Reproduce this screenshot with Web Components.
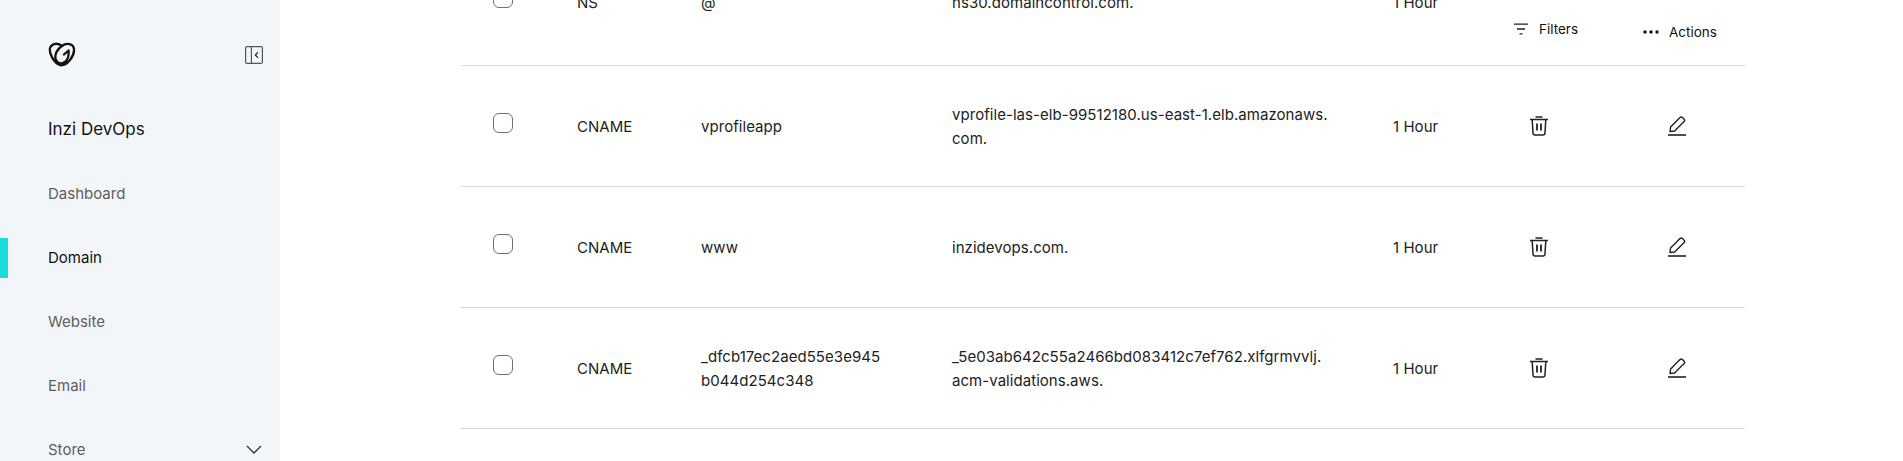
<!DOCTYPE html>
<html lang="en">
<head>
<meta charset="utf-8">
<title>Inzi DevOps DNS</title>
<style>
  html, body { margin: 0; height: 461px; overflow: hidden; background: #fff; }
  body { display: flex; font-family: Inter, "Liberation Sans", sans-serif; color: #111; }
</style>
</head>
<body>
<side-bar>
  <nav-item>Dashboard</nav-item>
  <nav-item active>Domain</nav-item>
  <nav-item>Website</nav-item>
  <nav-item>Email</nav-item>
  <nav-item expandable>Store</nav-item>
</side-bar>
<dns-table>
  <dns-row tall>
    <span slot="type">NS</span><span slot="name">@</span>
    <span slot="value">ns30.domaincontrol.com.</span><span slot="ttl">1 Hour</span>
  </dns-row>
  <dns-row>
    <span slot="type">CNAME</span><span slot="name">vprofileapp</span>
    <span slot="value">vprofile-las-elb-99512180.us-east-1.elb.amazonaws.<br>com.</span><span slot="ttl">1 Hour</span>
  </dns-row>
  <dns-row>
    <span slot="type">CNAME</span><span slot="name">www</span>
    <span slot="value">inzidevops.com.</span><span slot="ttl">1 Hour</span>
  </dns-row>
  <dns-row>
    <span slot="type">CNAME</span><span slot="name">_dfcb17ec2aed55e3e945<br>b044d254c348</span>
    <span slot="value">_5e03ab642c55a2466bd083412c7ef762.xlfgrmvvlj.<br>acm-validations.aws.</span><span slot="ttl">1 Hour</span>
  </dns-row>
</dns-table>
<script>
class SideBar extends HTMLElement {
  connectedCallback() {
    this.attachShadow({ mode: 'open' });
    this.shadowRoot.innerHTML = `
      <style>
        :host { display: block; flex: 0 0 280px; height: 461px; overflow: hidden; background: #f3f6f8; }
        .top { display: flex; align-items: center; justify-content: space-between; padding: 42px 17px 0 48px; height: 25px; }
        .top svg { display: block; }
        .org { margin: 42px 0 0 48px; height: 40px; line-height: 40px; font-size: 17px; font-weight: 400; color: #111; }
        .items { margin-top: 12.5px; }
      </style>
      <div class="top">
        <svg width="28" height="25" viewBox="0 0 28 25" fill="none" stroke="#111" stroke-width="2.3" stroke-linecap="round" stroke-linejoin="round">
          <path d="M14 4C10.5 0.6 4 1 2.2 5.5C0.4 11 6 21.5 13 23.4C20 23.4 26.6 13.5 26 7C25.4 1.8 18.5 0.4 14 4C9 7 6 13 8 18C9.5 21.5 14 22.5 17 20C20 17.5 21 13 20.5 8.5L16 12.5"/>
        </svg>
        <svg width="18" height="18" viewBox="0 0 18 18" fill="none" stroke="#555" stroke-width="1.2" stroke-linecap="round" stroke-linejoin="round">
          <rect x="0.6" y="0.6" width="16.8" height="16.8" rx="1.5"/>
          <path d="M6.4 0.6V17.4"/>
          <path d="M12.6 6.6L10.4 9L12.6 11.4" stroke="#222"/>
        </svg>
      </div>
      <div class="org">Inzi DevOps</div>
      <div class="items"><slot></slot></div>
    `;
  }
}

class NavItem extends HTMLElement {
  connectedCallback() {
    this.attachShadow({ mode: 'open' });
    const chevron = this.hasAttribute('expandable')
      ? '<svg width="16" height="9" viewBox="0 0 16 9" fill="none" stroke="#333" stroke-width="1.3"><path d="M1 1L8 8L15 1"/></svg>'
      : '';
    this.shadowRoot.innerHTML = `
      <style>
        :host { display: flex; align-items: center; justify-content: space-between; height: 64px; padding: 0 18px 0 48px;
          font-size: 15px; color: #5e5e5e; }
        :host([active]) { color: #111; background: linear-gradient(#1bdbdb, #1bdbdb) left center / 8px 40px no-repeat; }
      </style>
      <slot></slot>${chevron}
    `;
  }
}

class DnsTable extends HTMLElement {
  connectedCallback() {
    this.attachShadow({ mode: 'open' });
    this.shadowRoot.innerHTML = `
      <style>
        :host { display: block; position: relative; flex: 1; min-width: 0; height: 461px; overflow: hidden; }
        .rows { margin: -62px 158px 0 181px; }
        /* floating toolbar, its white box hides the icons of the row scrolled under it */
        .tools { position: absolute; top: 0; left: 1220px; width: 245px; height: 50px; box-sizing: border-box; padding: 21px 0 0 14px;
          display: flex; align-items: flex-start; background: #fff; font-size: 13.5px; color: #111; }
        .tool { display: flex; align-items: center; white-space: nowrap; }
        .filters { gap: 11px; width: 129px; }
        .actions { gap: 10px; margin-top: 3px; }
        svg { display: block; }
      </style>
      <div class="rows"><slot></slot></div>
      <div class="tools">
        <div class="tool filters">
          <svg width="14" height="12" viewBox="0 0 14 12" fill="none" stroke="#222" stroke-width="1.3"><path d="M0 1.2H14M3 6H11M5.5 10.8H8.5"/></svg>
          <span>Filters</span>
        </div>
        <div class="tool actions">
          <svg width="16" height="4" viewBox="0 0 16 4" fill="#111"><circle cx="2" cy="2" r="1.7"/><circle cx="8" cy="2" r="1.7"/><circle cx="14" cy="2" r="1.7"/></svg>
          <span>Actions</span>
        </div>
      </div>
    `;
  }
}

class DnsRow extends HTMLElement {
  connectedCallback() {
    this.attachShadow({ mode: 'open' });
    this.shadowRoot.innerHTML = `
      <style>
        :host { display: grid; grid-template-columns: 116px 124px 251px 441px 137px 138px 1fr; align-items: center;
          height: 120px; border-bottom: 1px solid #d3d9de; font-size: 15px; line-height: 24px; letter-spacing: 0.05px; color: #222; }
        :host([tall]) { height: 127px; }
        .check { width: 20px; height: 20px; margin: -7px 0 0 32px; box-sizing: border-box; border: 1px solid #6f6f6f; border-radius: 6px; background: #fff; }
        .cell { padding-top: 2px; }
        svg { display: block; }
      </style>
      <div class="check"></div>
      <div class="cell"><slot name="type"></slot></div>
      <div class="cell"><slot name="name"></slot></div>
      <div class="cell"><slot name="value"></slot></div>
      <div class="cell"><slot name="ttl"></slot></div>
      <div class="icon del">
        <svg width="18" height="20" viewBox="0 0 18 20" fill="none" stroke="#222" stroke-width="1.5" stroke-linejoin="round">
          <path d="M0 3.5H18M5.5 1H12.5" stroke-width="1.7"/>
          <path d="M2.2 3.5L3 17C3.1 18.2 3.9 19 5 19H13C14.1 19 14.9 18.2 15 17L15.8 3.5"/>
          <path d="M7 7.5V14.5M11 7.5V14.5" stroke-width="1.8"/>
        </svg>
      </div>
      <div class="icon edit">
        <svg width="18" height="20" viewBox="0 0 18 20" fill="none" stroke="#222" stroke-width="1.4" stroke-linejoin="round">
          <path d="M2 15.5L2.6 11L12 1.6C12.8 0.9 13.8 0.9 14.5 1.6L16.1 3.2C16.8 3.9 16.8 4.9 16.1 5.6L6.6 15L2 15.5Z"/>
          <path d="M0 19H18" stroke-width="1.6"/>
        </svg>
      </div>
    `;
  }
}

customElements.define('nav-item', NavItem);
customElements.define('side-bar', SideBar);
customElements.define('dns-table', DnsTable);
customElements.define('dns-row', DnsRow);
</script>
</body>
</html>
